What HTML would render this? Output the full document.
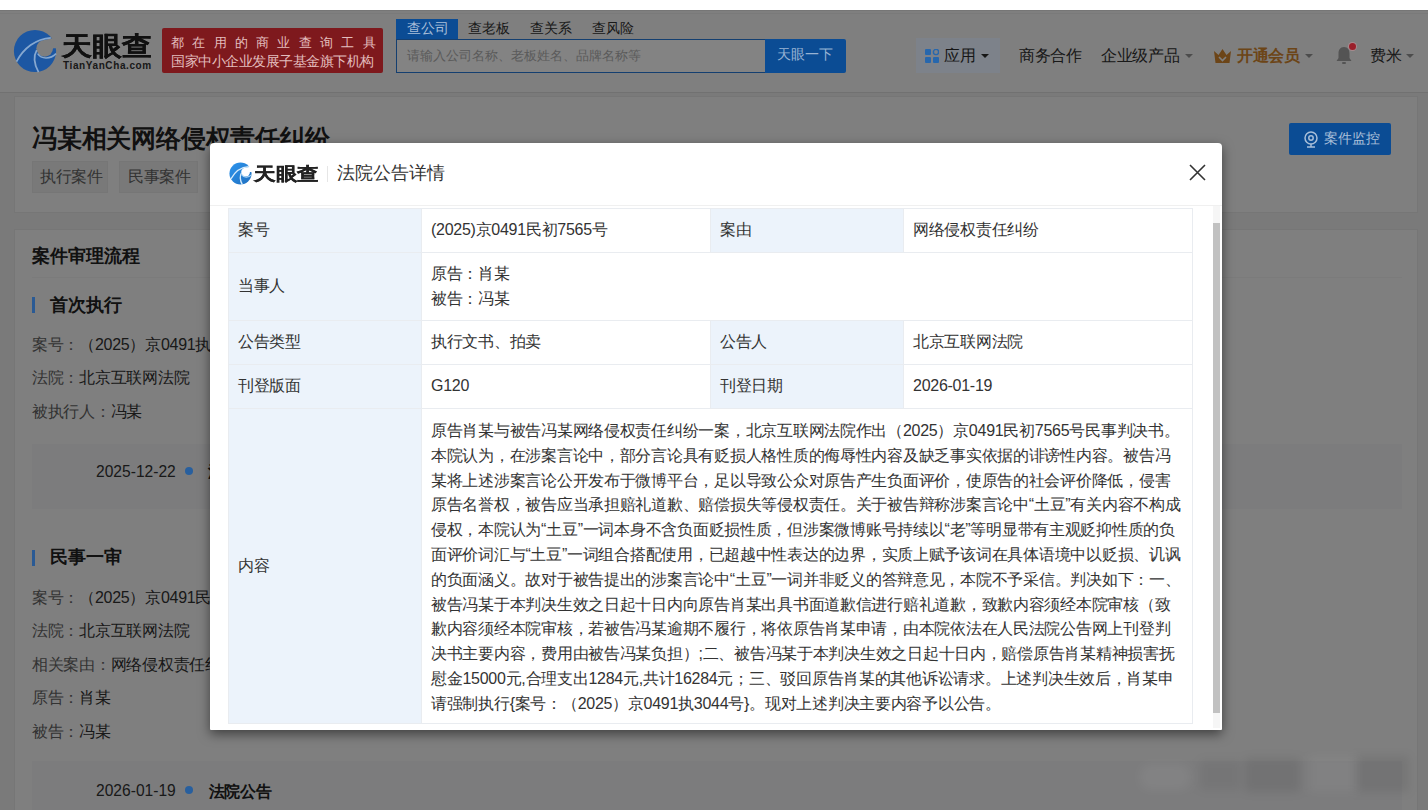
<!DOCTYPE html>
<html><head><meta charset="utf-8">
<style>
*{box-sizing:border-box;margin:0;padding:0}
html,body{width:1428px;height:810px;overflow:hidden}
body{font-family:"Liberation Sans",sans-serif;background:#f5f5f5;position:relative;color:#333}
.a{position:absolute;white-space:nowrap;line-height:1}
#strip{left:0;top:0;width:1428px;height:10px;background:#fff;z-index:20}
#hdr{left:0;top:10px;width:1428px;height:83px;background:#fff;border-bottom:1px solid #e3e3e3}
.card{position:absolute;background:#fff;border:1px solid #ededed}
#ov{left:0;top:10px;width:1428px;height:800px;background:rgba(0,0,0,.5);z-index:10}
#modal{left:210px;top:143px;width:1012px;height:587px;background:#fff;border-radius:4px 4px 1px 1px;z-index:15;box-shadow:0 4px 12px rgba(0,0,0,.5)}
.cell{position:absolute;border:1px solid #e9ecf0}
.lab{background:#ecf3fb}
.val{background:#fff}
.t16{font-size:16px;letter-spacing:-0.27px;color:#333}
.caret{position:absolute;width:0;height:0;border-left:4px solid transparent;border-right:4px solid transparent;border-top:4px solid #999}
</style></head><body>
<div id="strip" class="a"></div>
<div id="hdr" class="a"></div>

<!-- header logo -->
<svg class="a" style="left:13px;top:29px;z-index:12" width="44" height="44" viewBox="0 0 100 100">
  <defs><mask id="hm"><rect width="100" height="100" fill="#fff"/><circle cx="72" cy="44" r="19" fill="#000"/><path d="M72 25 L100 18 L100 44 L72 44 Z" fill="#000"/></mask></defs>
  <circle cx="50" cy="50" r="48" fill="#1c57a3" mask="url(#hm)"/>
  <path d="M8 74 C24 44 52 22 86 20" stroke="#86a8d0" stroke-width="4" fill="none"/>
  <path d="M58 98 C48 80 46 62 54 48" stroke="#86a8d0" stroke-width="4" fill="none"/>
  <path d="M56 56 C64 68 84 70 98 56" stroke="#86a8d0" stroke-width="3.5" fill="none"/>
</svg>
<div class="a" style="left:62px;top:33px;font-size:26px;font-weight:bold;color:#222;-webkit-text-stroke:0.3px #222;transform:scaleX(1.15);transform-origin:0 0">天眼查</div>
<div class="a" style="left:63px;top:61px;font-size:10px;font-weight:bold;color:#333;letter-spacing:0.6px">TianYanCha.com</div>

<!-- red banner -->
<div class="a" style="left:162px;top:28px;width:221px;height:45px;background:#7e191d;border-radius:2px;z-index:12"></div>
<div class="a" style="left:171px;top:36px;font-size:13.2px;color:#e3bdbd;letter-spacing:8.3px;z-index:12">都在用的商业查询工具</div>
<div class="a" style="left:171px;top:54px;font-size:14px;letter-spacing:-0.47px;color:#e3bdbd;z-index:12">国家中小企业发展子基金旗下机构</div>

<!-- search -->
<div class="a" style="left:396px;top:19px;width:62px;height:21px;background:#0b4c94;z-index:12"></div>
<div class="a" style="left:407px;top:22px;font-size:13.7px;color:#a9bfd9;z-index:12">查公司</div>
<div class="a" style="left:468px;top:22px;font-size:13.7px;color:#333">查老板</div>
<div class="a" style="left:530px;top:22px;font-size:13.7px;color:#333">查关系</div>
<div class="a" style="left:592px;top:22px;font-size:13.7px;color:#333">查风险</div>
<div class="a" style="left:396px;top:39px;width:370px;height:34px;border:1px solid #143f70;background:#fff;z-index:12;background:#838383"></div>
<div class="a" style="left:407px;top:49px;font-size:13.4px;color:#5a5a5a;z-index:12">请输入公司名称、老板姓名、品牌名称等</div>
<div class="a" style="left:765px;top:39px;width:81px;height:34px;background:#0b4c94;border-radius:0 2px 2px 0;z-index:12"></div>
<div class="a" style="left:777px;top:48px;font-size:13.8px;color:#98b3d3;z-index:12">天眼一下</div>

<!-- nav -->
<div class="a" style="left:916px;top:38px;width:84px;height:35px;background:#7d828a;z-index:11"></div>
<svg class="a" style="left:925px;top:49px;z-index:12" width="14" height="14" viewBox="0 0 14 14">
  <rect x="0" y="0" width="6" height="6" rx="1" fill="#2767ad"/>
  <circle cx="11" cy="3" r="2.6" fill="none" stroke="#2767ad" stroke-width="1.4"/>
  <rect x="0" y="8" width="6" height="6" rx="1" fill="#2767ad"/>
  <rect x="8" y="8" width="6" height="6" rx="1" fill="#2767ad"/>
</svg>
<div class="a" style="left:944px;top:48px;font-size:16px;letter-spacing:-0.27px;color:#161616;z-index:12">应用</div>
<div class="caret" style="left:981px;top:54px;border-top-color:#161616;z-index:12"></div>
<div class="a" style="left:1019px;top:48px;font-size:16px;letter-spacing:-0.27px;color:#333">商务合作</div>
<div class="a" style="left:1101px;top:48px;font-size:16px;letter-spacing:-0.27px;color:#333">企业级产品</div>
<div class="caret" style="left:1185px;top:54px"></div>
<svg class="a" style="left:1213px;top:48px" width="19" height="16" viewBox="0 0 19 16">
  <path d="M1 3 L5.5 7 L9.5 1 L13.5 7 L18 3 L16.5 15 L2.5 15 Z" fill="#d98a30"/>
  <path d="M6 9 L9.5 12.5 L13 9" stroke="#fff" stroke-width="1.6" fill="none"/>
</svg>
<div class="a" style="left:1237px;top:48px;font-size:16px;letter-spacing:-0.27px;font-weight:bold;color:#d98a30">开通会员</div>
<div class="caret" style="left:1305px;top:54px"></div>
<svg class="a" style="left:1335px;top:46px" width="18" height="19" viewBox="0 0 18 19">
  <path d="M9 1 C5 1 3.5 4 3.5 7.5 L3.5 12 L1.5 15 L16.5 15 L14.5 12 L14.5 7.5 C14.5 4 13 1 9 1 Z" fill="#a8a8a8"/>
  <rect x="7" y="16" width="4" height="2" rx="1" fill="#a8a8a8"/>
</svg>
<div class="a" style="left:1349px;top:43px;width:7px;height:7px;border-radius:50%;background:#9a1f2a;box-shadow:0 0 0 1px #a98a8e;z-index:12"></div>
<div class="a" style="left:1370px;top:48px;font-size:16px;letter-spacing:-0.27px;color:#333">费米</div>
<div class="caret" style="left:1406px;top:54px"></div>

<!-- page cards -->
<div class="card" style="left:14px;top:96px;width:1404px;height:117px"></div>
<div class="a" style="left:32px;top:127px;font-size:24.5px;letter-spacing:-0.2px;font-weight:bold;color:#222">冯某相关网络侵权责任纠纷</div>
<div class="a" style="left:32px;top:161px;width:76px;height:32px;background:#f3f3f3;border:1px solid #ececec"></div>
<div class="a" style="left:40px;top:169px;font-size:16px;letter-spacing:-0.27px;color:#666">执行案件</div>
<div class="a" style="left:119px;top:161px;width:79px;height:32px;background:#f3f3f3;border:1px solid #ececec"></div>
<div class="a" style="left:128px;top:169px;font-size:16px;letter-spacing:-0.27px;color:#666">民事案件</div>
<div class="a" style="left:1289px;top:123px;width:102px;height:32px;background:#0b4c94;border-radius:2px;z-index:12"></div>
<svg class="a" style="left:1303px;top:131px;z-index:12" width="16" height="17" viewBox="0 0 16 17">
  <circle cx="8" cy="7" r="6" fill="none" stroke="#a9bfd9" stroke-width="1.5"/>
  <circle cx="8" cy="7" r="2.2" fill="none" stroke="#a9bfd9" stroke-width="1.5"/>
  <path d="M4 16 L12 16 M8 13 L8 16" stroke="#a9bfd9" stroke-width="1.5"/>
</svg>
<div class="a" style="left:1324px;top:132px;font-size:13.7px;color:#a9bfd9;z-index:12">案件监控</div>

<div class="card" style="left:14px;top:229px;width:1404px;height:600px"></div>
<div class="a" style="left:32px;top:248px;font-size:17.8px;font-weight:bold;color:#222">案件审理流程</div>
<div class="a" style="left:32px;top:277px;width:1370px;height:1px;background:#f7f7f7"></div>

<div class="a" style="left:32px;top:297px;width:3px;height:16px;background:#2a5a94;z-index:12"></div>
<div class="a" style="left:50px;top:297px;font-size:17.8px;font-weight:bold;color:#222">首次执行</div>
<div class="a" style="left:32px;top:337px;font-size:16px;letter-spacing:-0.27px;color:#666">案号：<span style="color:#333">（2025）京0491执3044号</span></div>
<div class="a" style="left:32px;top:370px;font-size:16px;letter-spacing:-0.27px;color:#666">法院：<span style="color:#333">北京互联网法院</span></div>
<div class="a" style="left:32px;top:404px;font-size:16px;letter-spacing:-0.27px;color:#666">被执行人：<span style="color:#333">冯某</span></div>

<div class="a" style="left:32px;top:444px;width:1370px;height:65px;background:#f8f9fb"></div>
<div class="a" style="left:96px;top:464px;font-size:15.6px;color:#333">2025-12-22</div>
<div class="a" style="left:185px;top:467px;width:8px;height:8px;border-radius:50%;background:#285f9e;z-index:12"></div>
<div class="a" style="left:208px;top:464px;font-size:16px;letter-spacing:-0.27px;font-weight:bold;color:#222">法院公告</div>

<div class="a" style="left:32px;top:550px;width:3px;height:16px;background:#2a5a94;z-index:12"></div>
<div class="a" style="left:50px;top:549px;font-size:17.8px;font-weight:bold;color:#222">民事一审</div>
<div class="a" style="left:32px;top:590px;font-size:16px;letter-spacing:-0.27px;color:#666">案号：<span style="color:#333">（2025）京0491民初7565号</span></div>
<div class="a" style="left:32px;top:623px;font-size:16px;letter-spacing:-0.27px;color:#666">法院：<span style="color:#333">北京互联网法院</span></div>
<div class="a" style="left:32px;top:657px;font-size:16px;letter-spacing:-0.27px;color:#666">相关案由：<span style="color:#333">网络侵权责任纠纷</span></div>
<div class="a" style="left:32px;top:690px;font-size:16px;letter-spacing:-0.27px;color:#666">原告：<span style="color:#333">肖某</span></div>
<div class="a" style="left:32px;top:724px;font-size:16px;letter-spacing:-0.27px;color:#666">被告：<span style="color:#333">冯某</span></div>

<div class="a" style="left:32px;top:761px;width:1370px;height:65px;background:#f8f9fb"></div>
<div class="a" style="left:96px;top:783px;font-size:15.6px;color:#333">2026-01-19</div>
<div class="a" style="left:185px;top:786px;width:8px;height:8px;border-radius:50%;background:#285f9e;z-index:12"></div>
<div class="a" style="left:208.5px;top:784px;font-size:16px;letter-spacing:-0.27px;font-weight:bold;color:#222">法院公告</div>

<div id="ov" class="a"></div>
<div class="a" style="left:0;top:10px;width:1428px;height:1px;background:rgba(0,0,0,.07);z-index:11"></div>
<div class="a" style="left:0;top:13px;width:1428px;height:1px;background:rgba(0,0,0,.04);z-index:11"></div>
<div class="a" style="left:1135px;top:750px;width:280px;height:50px;z-index:11;filter:blur(5px)">
  <div class="a" style="left:5px;top:14px;width:50px;height:26px;background:rgba(255,255,255,.05);border-radius:10px"></div>
  <div class="a" style="left:65px;top:10px;width:40px;height:30px;background:rgba(0,0,0,.05)"></div>
  <div class="a" style="left:110px;top:8px;width:55px;height:34px;background:rgba(0,0,0,.08)"></div>
  <div class="a" style="left:175px;top:6px;width:45px;height:36px;background:rgba(255,255,255,.04)"></div>
  <div class="a" style="left:222px;top:6px;width:52px;height:36px;background:rgba(0,0,0,.07)"></div>
</div>

<!-- modal -->
<div id="modal" class="a">
  <svg class="a" style="left:19px;top:19px" width="23" height="23" viewBox="0 0 100 100">
    <defs><mask id="mm"><rect width="100" height="100" fill="#fff"/><circle cx="72" cy="44" r="19" fill="#000"/><path d="M72 25 L100 18 L100 44 L72 44 Z" fill="#000"/></mask>
    <linearGradient id="lg" x1="0" y1="0" x2="1" y2="1"><stop offset="0" stop-color="#2d95ee"/><stop offset="1" stop-color="#1f6fbf"/></linearGradient></defs>
    <circle cx="50" cy="50" r="48" fill="url(#lg)" mask="url(#mm)"/>
    <path d="M8 74 C24 44 52 22 86 20" stroke="#d6ecfb" stroke-width="6" fill="none"/>
    <path d="M58 98 C48 80 46 62 54 48" stroke="#d6ecfb" stroke-width="6" fill="none"/>
    <path d="M56 56 C64 68 84 70 98 56" stroke="#a8d4f5" stroke-width="5" fill="none"/>
  </svg>
  <div class="a" style="left:44px;top:22px;font-size:18px;font-weight:bold;color:#222;-webkit-text-stroke:0.25px #222;transform:scaleX(1.2);transform-origin:0 0">天眼查</div>
  <div class="a" style="left:117px;top:23px;width:1px;height:16px;background:#e6e6e6"></div>
  <div class="a" style="left:127px;top:21px;font-size:18px;color:#333">法院公告详情</div>
  <svg class="a" style="left:979px;top:21px" width="17" height="17" viewBox="0 0 17 17">
    <path d="M1 1 L16 16 M16 1 L1 16" stroke="#333" stroke-width="1.6"/>
  </svg>
  <div class="a" style="left:0;top:62px;width:1012px;height:1px;background:#f0f0f0"></div>
  <div class="a" style="left:1003px;top:63px;width:7px;height:522px;background:#f6f6f6"></div>
  <div class="a" style="left:1003px;top:80px;width:7px;height:490px;background:#c1c1c1"></div>
</div>

<!-- table (page coords) -->
<div class="a" style="left:228px;top:208px;width:965px;height:516px;z-index:16;background:#fff">
  <div class="cell lab" style="left:0;top:0;width:194px;height:45px"></div>
  <div class="cell val" style="left:193px;top:0;width:290px;height:45px"></div>
  <div class="cell lab" style="left:482px;top:0;width:194px;height:45px"></div>
  <div class="cell val" style="left:675px;top:0;width:290px;height:45px"></div>

  <div class="cell lab" style="left:0;top:44px;width:194px;height:69px"></div>
  <div class="cell val" style="left:193px;top:44px;width:772px;height:69px"></div>

  <div class="cell lab" style="left:0;top:112px;width:194px;height:45px"></div>
  <div class="cell val" style="left:193px;top:112px;width:290px;height:45px"></div>
  <div class="cell lab" style="left:482px;top:112px;width:194px;height:45px"></div>
  <div class="cell val" style="left:675px;top:112px;width:290px;height:45px"></div>

  <div class="cell lab" style="left:0;top:156px;width:194px;height:45px"></div>
  <div class="cell val" style="left:193px;top:156px;width:290px;height:45px"></div>
  <div class="cell lab" style="left:482px;top:156px;width:194px;height:45px"></div>
  <div class="cell val" style="left:675px;top:156px;width:290px;height:45px"></div>

  <div class="cell lab" style="left:0;top:200px;width:194px;height:316px"></div>
  <div class="cell val" style="left:193px;top:200px;width:772px;height:316px"></div>
</div>

<div class="a t16" style="left:238px;top:222px;z-index:17">案号</div>
<div class="a t16" style="left:431px;top:222px;z-index:17">(2025)京0491民初7565号</div>
<div class="a t16" style="left:720px;top:222px;z-index:17">案由</div>
<div class="a t16" style="left:913px;top:222px;z-index:17">网络侵权责任纠纷</div>

<div class="a t16" style="left:238px;top:278px;z-index:17">当事人</div>
<div class="a t16" style="left:431px;top:266px;z-index:17">原告：肖某</div>
<div class="a t16" style="left:431px;top:291px;z-index:17">被告：冯某</div>

<div class="a t16" style="left:238px;top:334px;z-index:17">公告类型</div>
<div class="a t16" style="left:431px;top:334px;z-index:17">执行文书、拍卖</div>
<div class="a t16" style="left:720px;top:334px;z-index:17">公告人</div>
<div class="a t16" style="left:913px;top:334px;z-index:17">北京互联网法院</div>

<div class="a t16" style="left:238px;top:378px;z-index:17">刊登版面</div>
<div class="a t16" style="left:431px;top:378px;z-index:17">G120</div>
<div class="a t16" style="left:720px;top:378px;z-index:17">刊登日期</div>
<div class="a t16" style="left:913px;top:378px;z-index:17">2026-01-19</div>

<div class="a t16" style="left:238px;top:558px;z-index:17">内容</div>
<div class="a t16" style="left:431px;top:422px;z-index:17;line-height:24.8px;margin-top:-3px">原告肖某与被告冯某网络侵权责任纠纷一案，北京互联网法院作出（2025）京0491民初7565号民事判决书。<br>本院认为，在涉案言论中，部分言论具有贬损人格性质的侮辱性内容及缺乏事实依据的诽谤性内容。被告冯<br>某将上述涉案言论公开发布于微博平台，足以导致公众对原告产生负面评价，使原告的社会评价降低，侵害<br>原告名誉权，被告应当承担赔礼道歉、赔偿损失等侵权责任。关于被告辩称涉案言论中“土豆”有关内容不构成<br>侵权，本院认为“土豆”一词本身不含负面贬损性质，但涉案微博账号持续以“老”等明显带有主观贬抑性质的负<br>面评价词汇与“土豆”一词组合搭配使用，已超越中性表达的边界，实质上赋予该词在具体语境中以贬损、讥讽<br>的负面涵义。故对于被告提出的涉案言论中“土豆”一词并非贬义的答辩意见，本院不予采信。判决如下：一、<br>被告冯某于本判决生效之日起十日内向原告肖某出具书面道歉信进行赔礼道歉，致歉内容须经本院审核（致<br>歉内容须经本院审核，若被告冯某逾期不履行，将依原告肖某申请，由本院依法在人民法院公告网上刊登判<br>决书主要内容，费用由被告冯某负担）;二、被告冯某于本判决生效之日起十日内，赔偿原告肖某精神损害抚<br>慰金15000元,合理支出1284元,共计16284元；三、驳回原告肖某的其他诉讼请求。上述判决生效后，肖某申<br>请强制执行{案号：（2025）京0491执3044号}。现对上述判决主要内容予以公告。</div>

</body></html>
